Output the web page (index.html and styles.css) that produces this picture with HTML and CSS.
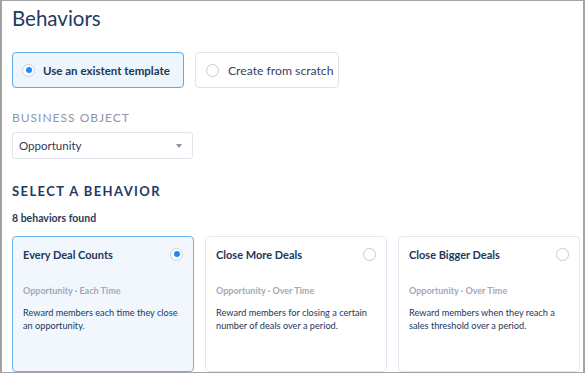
FILE: index.html
```html
<!DOCTYPE html>
<html>
<head>
<meta charset="utf-8">
<link rel="stylesheet" href="styles.css">
</head>
<body>
<div class="frame">
  <h1 class="title">Behaviors</h1>
  <div class="modes">
    <div class="mode mode-active"><span class="radio radio-on"></span>Use an existent template</div>
    <div class="mode"><span class="radio"></span>Create from scratch</div>
  </div>
  <div class="label">BUSINESS OBJECT</div>
  <div class="select"><span>Opportunity</span><span class="caret"></span></div>
  <h2 class="section">SELECT A BEHAVIOR</h2>
  <div class="count">8 behaviors found</div>
  <div class="cards">
    <div class="card card-active">
      <div class="card-head"><span class="card-title">Every Deal Counts</span><span class="radio radio-on"></span></div>
      <div class="meta">Opportunity · Each Time</div>
      <div class="desc">Reward members each time they close an opportunity.</div>
    </div>
    <div class="card">
      <div class="card-head"><span class="card-title">Close More Deals</span><span class="radio"></span></div>
      <div class="meta">Opportunity · Over Time</div>
      <div class="desc">Reward members for closing a certain number of deals over a period.</div>
    </div>
    <div class="card">
      <div class="card-head"><span class="card-title">Close Bigger Deals</span><span class="radio"></span></div>
      <div class="meta">Opportunity · Over Time</div>
      <div class="desc">Reward members when they reach a sales threshold over a period.</div>
    </div>
  </div>
</div>
</body>
</html>
```
FILE: styles.css
```css
* { box-sizing: border-box; }
html, body { margin: 0; padding: 0; background: #fff; }
body { font-family: Lato, "Open Sans", sans-serif; color: #22375a; }
.frame {
  width: 585px;
  height: 373px;
  border-top: 1px solid #a3a3a3;
  border-left: 2px solid #a3a3a3;
  border-right: 2px solid #a3a3a3;
  border-bottom: 1px solid #a3a3a3;
  padding: 0 0 0 10px;
  overflow: hidden;
}
.title {
  margin: 0;
  padding-top: 3px;
  font-size: 20.5px;
  line-height: 28px;
  font-weight: 400;
  color: #1f3a63;
}
.modes { display: flex; gap: 11px; margin-top: 20px; }
.mode {
  height: 36px;
  display: flex;
  align-items: center;
  gap: 9px;
  padding: 0 10px;
  border: 1px solid #dfe3ea;
  border-radius: 4px;
  font-size: 12.2px;
  color: #34435f;
  white-space: nowrap;
}
.mode:first-child { width: 172px; gap: 8px; padding-left: 9px; }
.mode:last-child { width: 144px; }
.mode-active {
  background: #eef6fd;
  border-color: #5ea9ea;
  font-size: 11.5px;
  font-weight: 700;
  color: #22375a;
}
.radio {
  width: 13px;
  height: 13px;
  border-radius: 50%;
  border: 1px solid #c5cad4;
  background: #fff;
  flex: none;
  position: relative;
}
.radio-on { border-color: #c9d2de; }
.radio-on::after {
  content: "";
  position: absolute;
  left: 2.5px; top: 2.5px;
  width: 6px; height: 6px;
  border-radius: 50%;
  background: #1d8bf1;
}
.label {
  margin-top: 21px;
  font-size: 12px;
  letter-spacing: 1px;
  color: #8d96ab;
  line-height: 17px;
}
.select {
  margin-top: 6px;
  width: 181px;
  height: 27px;
  border: 1px solid #e1e5ec;
  border-radius: 3px;
  display: flex;
  align-items: center;
  justify-content: space-between;
  padding: 0 10px 0 6px;
  font-size: 11.5px;
  color: #2a3b5c;
}
.caret {
  width: 0; height: 0;
  border-left: 3.5px solid transparent;
  border-right: 3.5px solid transparent;
  border-top: 4px solid #8c94a6;
}
.section {
  margin: 22px 0 0;
  font-size: 13px;
  line-height: 20px;
  font-weight: 700;
  letter-spacing: 1.4px;
  color: #1f3a63;
}
.count {
  margin-top: 10px;
  font-size: 10.5px;
  font-weight: 700;
  color: #2a3b5c;
  line-height: 15px;
}
.cards { display: flex; gap: 11px; margin-top: 10px; }
.card {
  width: 182px;
  height: 136px;
  border: 1px solid #e3e7ee;
  border-radius: 4px;
  padding: 9px 10px 0 10px;
  background: #fff;
}
.card-active { background: #f1f7fc; border-color: #6eb1ea; }
.card-head { display: flex; justify-content: space-between; align-items: center; height: 16px; }
.card-title { font-size: 11px; font-weight: 700; color: #22375a; }
.meta {
  margin-top: 22px;
  font-size: 9px;
  font-weight: 700;
  color: #a2a9b9;
  line-height: 14px;
}
.desc {
  margin-top: 8px;
  font-size: 9.2px;
  line-height: 13px;
  color: #22375a;
}
```
